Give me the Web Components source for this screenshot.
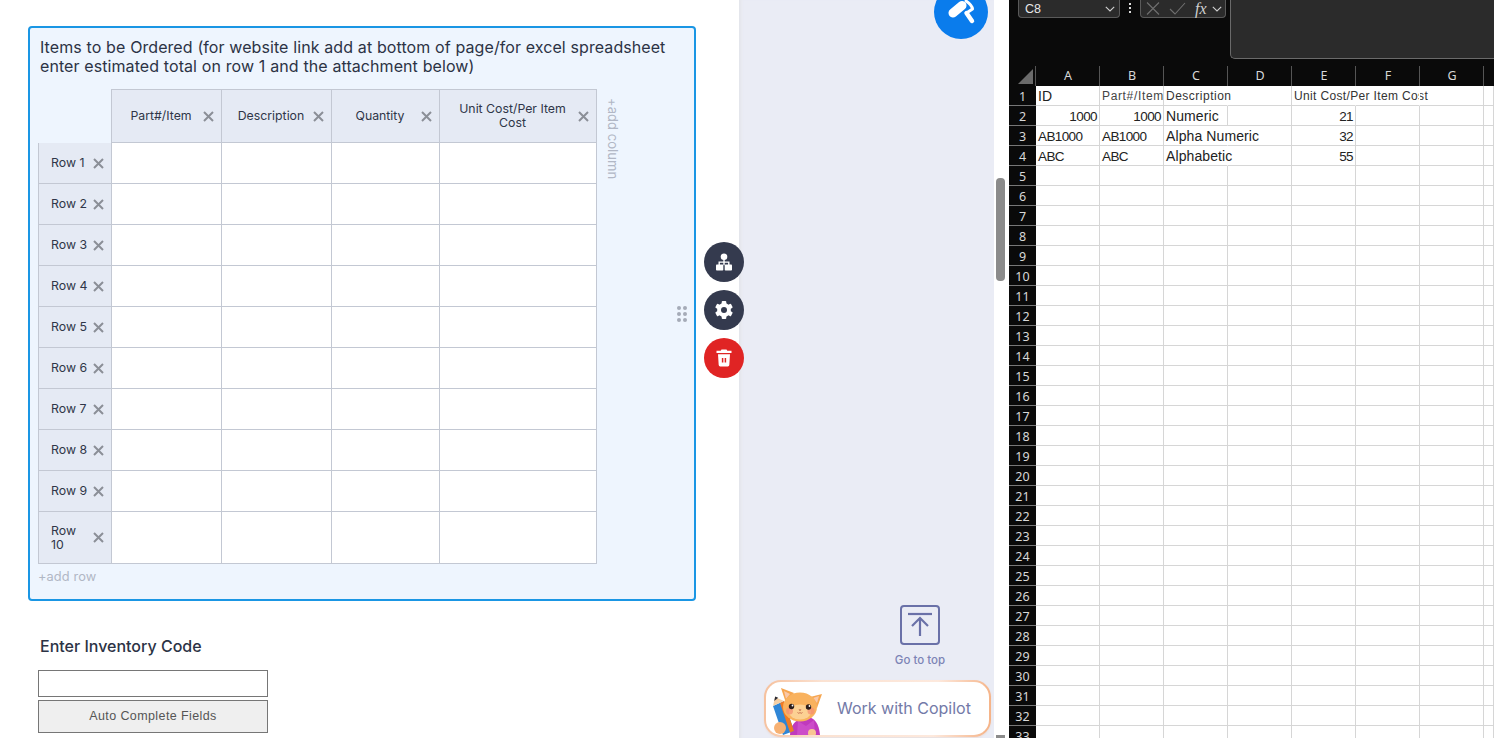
<!DOCTYPE html>
<html lang="en"><head><meta charset="utf-8"><title>Form builder</title>
<style>html,body{margin:0;padding:0;height:738px;overflow:hidden;background:#fff;font-family:Inter,"Liberation Sans",sans-serif}</style>
</head><body>
<app-shell>
  <form-pane></form-pane>
  <tool-rail></tool-rail>
  <scroll-track></scroll-track>
  <excel-pane></excel-pane>
</app-shell>
<script>
const X_ICON='<svg width="11" height="11" viewBox="0 0 11 11" aria-hidden="true"><path d="M1 1l9 9M10 1l-9 9" stroke="#8b8f97" stroke-width="2" fill="none"/></svg>';
function def(name,css,html){
  customElements.define(name,class extends HTMLElement{
    constructor(){super();const r=this.attachShadow({mode:'open'});r.innerHTML='<style>'+css+'</style>'+(typeof html==='function'?html():html);}
  });
}
def('app-shell',':host{display:flex;width:1494px;height:738px;overflow:hidden}','<slot></slot>');

def('matrix-table',`
:host{display:grid;grid-template-columns:74px 110px 110px 108px 157px;grid-template-rows:54px repeat(9,41px) 52px;width:559px;font:12.300px/14px Inter,sans-serif;color:#2f3648}
div{box-sizing:border-box;border-right:1px solid #c3c8d3;border-bottom:1px solid #c3c8d3;background:#fff}
.corner{background:none;border-top:0;border-left:0;border-bottom:0}
.h{background:#e5eaf4;border-top:1px solid #c3c8d3;display:flex;align-items:center;padding:0 7px 0 10px;gap:3px}
.h span{flex:1;text-align:center}
.h:last-child{border-right:0}
.r{background:#e5eaf4;border-left:1px solid #c3c8d3;display:flex;align-items:center;justify-content:space-between;padding:0 7px 0 12px}
.r span{white-space:nowrap}
svg{flex:none}
`,()=>{
  let s='<div class="corner"></div>';
  for(const h of ['Part#/Item','Description','Quantity','Unit Cost/Per Item Cost'])s+=`<div class="h"><span>${h}</span>${X_ICON}</div>`;
  for(let i=1;i<=10;i++){s+=`<div class="r"><span>${i==10?'Row<br>10':'Row '+i}</span>${X_ICON}</div>`+'<div></div>'.repeat(4);}
  return s;
});

def('form-card',`
:host{display:block;box-sizing:border-box;width:668px;height:575px;border:2px solid #1a96e4;border-radius:4px;background:#eef5fe;padding:10px 8px 0;position:relative}
h2{margin:0 0 13px 2px;font:400 16px/19px Inter,sans-serif;color:#2c3345;letter-spacing:.07px;word-spacing:.2px}
.row{display:flex}
.addc{writing-mode:vertical-rl;font:13px/16px Inter,sans-serif;color:#b1b7c5;margin:9px 0 0 8px;letter-spacing:.05px}
.addr{font:12.800px/16px Inter,sans-serif;color:#b1b7c5;margin:5px 0 0 0;letter-spacing:.1px}
.drag{position:absolute;left:647px;top:278px;display:grid;grid-template-columns:4px 4px;gap:2px}
.drag i{width:4px;height:4px;border-radius:50%;background:#a5abb8}
`,`<h2>Items to be Ordered (for website link add at bottom of page/for excel spreadsheet enter estimated total on row 1 and the attachment below)</h2>
<div class="row"><matrix-table></matrix-table><div class="addc">+add column</div></div>
<div class="addr">+add row</div>
<div class="drag"><i></i><i></i><i></i><i></i><i></i><i></i></div>`);

def('action-stack',`
:host{position:absolute;left:704px;top:242px;display:flex;flex-direction:column;gap:8px;z-index:2}
b{display:flex;width:40px;height:40px;border-radius:50%;background:#343a4e;align-items:center;justify-content:center}
b.red{background:#e02424}
`,`<b><svg width="20" height="20" viewBox="0 0 20 20" fill="#fff" aria-hidden="true"><circle cx="10" cy="4.700" r="3.300"/><path d="M9.300 7h1.400v2.500h4.800v3.500h-1.400v-2.200H10.700V13H9.300v-2.200H5.900V13H4.500V9.500h4.800z"/><rect x="2" y="12.500" width="7.300" height="6" rx=".8"/><rect x="10.700" y="12.500" width="7.300" height="6" rx=".8"/></svg></b>
<b><svg width="20" height="20" viewBox="0 0 20 20" aria-hidden="true"><g fill="#fff"><rect x="7.700" y="1" width="4.600" height="18" rx="1"/><rect x="7.700" y="1" width="4.600" height="18" rx="1" transform="rotate(60 10 10)"/><rect x="7.700" y="1" width="4.600" height="18" rx="1" transform="rotate(120 10 10)"/></g><circle cx="10" cy="10" r="5.200" fill="none" stroke="#fff" stroke-width="3.400"/><circle cx="10" cy="10" r="3" fill="#343a4e"/></svg></b>
<b class="red"><svg width="20" height="20" viewBox="0 0 20 20" aria-hidden="true"><path d="M7.500 1.500h5l.8 1.200H17.500v2.300h-15V2.700h4.200z" fill="#fff"/><path d="M4 6.200h12l-.7 10.800a1.500 1.500 0 0 1-1.500 1.400H6.200a1.500 1.500 0 0 1-1.500-1.400z" fill="#fff"/><path d="M8.600 10v4.500M11.400 10v4.500" stroke="#e02424" stroke-width="1.500"/></svg></b>`);

def('form-pane',`
:host{display:block;flex:none;width:739px;height:738px;box-sizing:border-box;padding:26px 0 0 28px;background:#fff;position:relative}
label{display:block;margin:36px 0 14px 12px;font:500 16px/19px Inter,sans-serif;color:#2c3345}
.inp{display:block;box-sizing:border-box;margin-left:10px;width:230px;height:27px;border:1px solid #767676;background:#fff}
.btn{display:block;box-sizing:border-box;margin:3px 0 0 10px;width:230px;height:33px;border:1px solid #767676;background:#efefef;color:#555;font:12.500px/31px "Liberation Sans",sans-serif;text-align:center;letter-spacing:.4px}
`,`<form-card></form-card>
<label>Enter Inventory Code</label>
<div class="inp"></div>
<div class="btn">Auto Complete Fields</div>
<action-stack></action-stack>`);

def('copilot-button',`
:host{position:absolute;left:25px;top:680px;box-sizing:border-box;width:227px;height:57px;border:2px solid transparent;border-radius:17px;background:linear-gradient(#fff,#fff) padding-box,linear-gradient(95deg,#f6c09c,#fbe2d2 25%,#fde9dd 75%,#f5b184) border-box;display:flex;align-items:center;padding-bottom:2px;box-shadow:0 1px 2px rgba(240,170,120,.2)}
svg{position:absolute;left:6px;bottom:0}
span{margin-left:71px;font:400 16px/20px Inter,sans-serif;color:#737aa8}
`,`<svg width="54" height="50" viewBox="0 0 54 50" aria-hidden="true">
<path d="M18 50c0-9 6-17 16-18 9 0 13 7 14 18z" fill="#c03abd"/><path d="M26 36l8 5 8-6 1 15H25z" fill="#cc4cc9"/>
<path d="M1 21l11-5 10 30-11 4z" fill="#2f86d6"/><path d="M8 18l4-2 10 30-4 1.500z" fill="#f07a24"/><path d="M1 21l2-9 9 4z" fill="#f3cfa5"/><path d="M2.200 16l1-4.500 3 1.300z" fill="#2b2b33"/>
<circle cx="8" cy="43" r="6" fill="#f7b173"/><circle cx="40" cy="48" r="4" fill="#f8c593"/>
<path d="M9 3l13 5-8 10z" fill="#f6a650"/><path d="M50 9l-12 3 7 11z" fill="#f6a650"/><path d="M12 6l6 3-4 5z" fill="#f9c8a8"/><path d="M47 11l-6 2 4 5z" fill="#f9c8a8"/>
<ellipse cx="28" cy="22" rx="17" ry="14.500" fill="#f9b25e"/><ellipse cx="28" cy="27" rx="11" ry="7.500" fill="#fcd193"/>
<circle cx="17.500" cy="26" r="3.500" fill="#f58d72" opacity=".7"/><circle cx="39" cy="26" r="3.500" fill="#f58d72" opacity=".7"/>
<circle cx="19.500" cy="21.500" r="2.700" fill="#2a1d1b"/><circle cx="36.500" cy="22" r="2.700" fill="#2a1d1b"/><circle cx="20.500" cy="20.500" r=".9" fill="#fff"/><circle cx="37.500" cy="21" r=".9" fill="#fff"/>
<path d="M26.500 24.500h3l-1.500 1.500z" fill="#b4523c"/><path d="M25.500 27.500c1 1 2 1 2.500 0 .5 1 1.500 1 2.500 0" stroke="#b4523c" stroke-width=".7" fill="none"/>
</svg><span>Work with Copilot</span>`);

def('tool-rail',`
:host{display:block;flex:none;width:255px;height:738px;background:#eaecf5;position:relative;box-shadow:inset 4px 0 3px -2px #e4e5ea}
.roller{position:absolute;left:195px;top:-15px;width:54px;height:54px;border-radius:50%;background:#0a7cec;display:flex;align-items:center;justify-content:center}
.top{position:absolute;left:161px;top:605px;width:40px;display:flex;flex-direction:column;align-items:center;white-space:nowrap}
.top span{margin-top:8px;font:500 11.500px/14px Inter,sans-serif;color:#7d84b6}
`,`<div class="roller"><svg width="54" height="54" viewBox="0 0 54 54" aria-hidden="true"><g fill="none" stroke="#fff" stroke-linecap="round" stroke-linejoin="round"><path d="M19 28L28 20.500" stroke-width="9"/><path d="M32 16Q38 20 38.500 24L32.500 28" stroke-width="3"/><path d="M32.500 28L38 36" stroke-width="4.500"/></g></svg></div>
<div class="top"><svg width="40" height="40" viewBox="0 0 40 40" aria-hidden="true" fill="none" stroke="#6a71a8" stroke-width="2"><rect x="1" y="1" width="38" height="38" rx="3"/><path d="M8 9h24" stroke-width="2.200"/><path d="M20 31V14M12 21l8-8 8 8" stroke-width="2.200"/></svg><span>Go to top</span></div>
<copilot-button></copilot-button>`);

def('scroll-track',`
:host{display:block;flex:none;width:15px;height:738px;background:#fff;position:relative}
.thumb{position:absolute;left:2px;top:178px;width:9px;height:103px;border-radius:4px;background:#8b8b8b}
.end{position:absolute;left:2px;bottom:0;width:9px;height:3px;background:#8b8b8b}
`,`<div class="thumb"></div><div class="end"></div>`);

def('excel-pane',`
:host{display:block;flex:none;width:485px;height:738px;background:#0a0a0a;overflow:hidden;font-family:"Liberation Sans",sans-serif}
.bar{display:flex;height:66px;align-items:flex-start;color:#e8e8e8}
.name{box-sizing:border-box;margin-left:9px;width:102px;height:18px;border:1px solid #5a5a5a;border-top:0;border-radius:0 0 4px 4px;background:#2b2b2b;font:12.500px/14px "Liberation Sans",sans-serif;padding-left:6px;display:flex;justify-content:space-between;align-items:center;padding-right:4px;flex:none}
.dots{flex:none;width:20px;display:flex;flex-direction:column;align-items:center;gap:2px;margin-top:3px}
.dots i{width:2px;height:2px;background:#ddd}
.fxb{box-sizing:border-box;width:86px;height:18px;border:1px solid #5a5a5a;border-top:0;border-radius:0 0 4px 4px;background:#2b2b2b;display:flex;align-items:center;padding:0 3px 0 5px;flex:none}
.fxb em{font:italic 400 16px/14px "Liberation Serif",serif;color:#d0d0d0;margin:0 auto 0 9px}
.formula{box-sizing:border-box;margin-left:4px;flex:1;height:59px;border:1px solid #6a6a6a;border-top:0;border-right:0;border-radius:0 0 0 5px;background:#2b2b2b}
.grid{display:grid;grid-template-columns:27px repeat(7,64px) 10px;grid-auto-rows:20px;background:#fff}
.ch,.rh{box-sizing:border-box;color:#d8d8d8;text-align:center;font:12.500px/20px "Noto Sans",sans-serif;background:#0a0a0a}
.ch{border-right:1px solid #555;padding-left:1px}
.rh{border-bottom:1px solid #777;line-height:21px}
.corner{position:relative;border-right:1px solid #555}
.corner svg{position:absolute;right:2px;bottom:2px}
.c{box-sizing:border-box;border-right:1px solid #d6d6d6;border-bottom:1px solid #d6d6d6;font:14px/21px "Liberation Sans",sans-serif;color:#222;padding:0 2px;white-space:nowrap;overflow:visible;letter-spacing:.1px}
.n{text-align:right}.o{border-right-color:#fff}
.k{font-size:13.500px;letter-spacing:-.6px}
.s{font-size:12px;letter-spacing:.5px;color:#333}
.s3{font-size:12px;letter-spacing:.35px;color:#333}
.s2{font-size:12px;letter-spacing:.65px;color:#444}
`,()=>{
  const chev='<svg width="10" height="6" viewBox="0 0 10 6" aria-hidden="true"><path d="M.8.8L5 5l4.200-4.200" stroke="#d0d0d0" fill="none" stroke-width="1.100"/></svg>';
  let g='<div class="ch corner"><svg width="15" height="15" viewBox="0 0 15 15" aria-hidden="true"><path d="M15 0v15H0z" fill="#6b6b6b"/></svg></div>';
  for(const c of 'ABCDEFG')g+=`<div class="ch">${c}</div>`;
  g+='<div class="ch" style="border:0"></div>';
  const data={1:[['ID','',''],['Part#/Item','','s2'],['Description','o','s'],['','',''],['Unit Cost/Per Item Cost','o','s3'],['','o','']],
   2:[['1000','n k'],['1000','n k'],['Numeric'],[''],['21','n k']],
   3:[['AB1000','k'],['AB1000','k'],['Alpha Numeric','o'],[''],['32','n k']],
   4:[['ABC','k'],['ABC','k'],['Alphabetic','o'],[''],['55','n k']]};
  for(let r=1;r<=33;r++){
    g+=`<div class="rh">${r}</div>`;
    for(let c=0;c<8;c++){
      const d=(data[r]&&data[r][c])||[''];
      g+=`<div class="c ${d[1]||''} ${d[2]||''}">${d[0]}</div>`;
    }
  }
  return `<div class="bar"><div class="name"><span>C8</span>${chev}</div><div class="dots"><i></i><i></i><i></i></div>
  <div class="fxb"><svg width="40" height="15" viewBox="0 0 40 15" aria-hidden="true" fill="none" stroke="#6f6f6f" stroke-width="1.100"><path d="M1 1.500l12 12M13 1.500l-12 12M24 8l5 5 10-11"/></svg><em>fx</em>${chev}</div>
  <div class="formula"></div></div><div class="grid">${g}</div>`;
});
</script>
</body></html>
